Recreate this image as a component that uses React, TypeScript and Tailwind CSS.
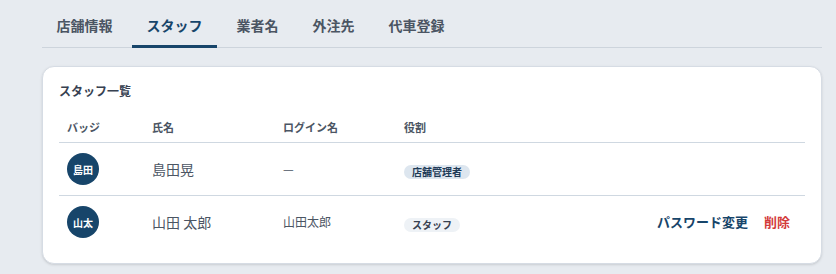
import React from 'react';

const tabs = ['店舗情報', 'スタッフ', '業者名', '外注先', '代車登録'];

type Staff = {
  badge: string;
  name: string;
  login: string;
  role: string;
  manager: boolean;
};

const staff: Staff[] = [
  { badge: '島田', name: '島田晃', login: '—', role: '店舗管理者', manager: true },
  { badge: '山太', name: '山田 太郎', login: '山田太郎', role: 'スタッフ', manager: false },
];

const App: React.FC = () => {
  return (
    <div
      className="min-h-[274px] w-[836px] bg-[#e7ebf0] px-[42px] pt-[5px]"
      style={{ fontFamily: '"Noto Sans CJK JP", "Noto Sans", sans-serif' }}
    >
      <div className="flex w-[780px] gap-[5px] border-b border-[#cdd4dc]">
        {tabs.map((t) => {
          const active = t === 'スタッフ';
          return (
            <div
              key={t}
              className={`-mb-px border-b-[3px] px-[14.5px] pt-2.5 pb-2.5 text-sm leading-5 font-bold ${
                active ? 'border-[#17456a] text-[#17456a]' : 'border-transparent text-[#4b5563]'
              }`}
            >
              {t}
            </div>
          );
        })}
      </div>

      <div className="mt-[18px] w-[780px] rounded-xl border border-[#d6dce4] bg-white px-4 pt-4 pb-[15px] shadow-sm">
        <h3 className="mb-3 text-xs leading-4 font-bold text-[#374151]">スタッフ一覧</h3>
        <table className="w-full border-collapse">
          <thead>
            <tr className="border-b border-[#cfd8e1]">
              <th className="w-[85px] px-2 pt-2 pb-[7px] text-left text-[11px] leading-4 font-bold text-[#4b5563]">バッジ</th>
              <th className="w-[131px] px-2 pt-2 pb-[7px] text-left text-[11px] leading-4 font-bold text-[#4b5563]">氏名</th>
              <th className="w-[121px] px-2 pt-2 pb-[7px] text-left text-[11px] leading-4 font-bold text-[#4b5563]">ログイン名</th>
              <th className="px-2 pt-2 pb-[7px] text-left text-[11px] leading-4 font-bold text-[#4b5563]">役割</th>
              <th className="px-2 pt-2 pb-[7px]"></th>
            </tr>
          </thead>
          <tbody>
            {staff.map((s, i) => (
              <tr key={s.name} className={i === 0 ? 'border-b border-[#cfd8e1]' : ''}>
                <td className="px-2 py-2.5">
                  <div className="flex h-8 w-8 items-center justify-center rounded-full bg-[#17456a] text-[10px] font-bold text-white">
                    {s.badge}
                  </div>
                </td>
                <td className="px-2 py-2.5 text-sm text-[#4b5563]">{s.name}</td>
                <td className="px-2 py-2.5 text-xs text-[#4b5563]">{s.login}</td>
                <td className="px-2 py-2.5">
                  <span
                    className={`inline-block rounded-full px-2 text-[10px] leading-[14px] font-bold ${
                      s.manager ? 'bg-[#dde6ef] text-[#1f3b57]' : 'bg-[#eef2f6] text-[#374151]'
                    }`}
                  >
                    {s.role}
                  </span>
                </td>
                <td className="py-2.5 pr-[15px] pl-2 text-right">
                  {!s.manager && (
                    <div className="flex justify-end gap-4 text-[13px] font-bold">
                      <button type="button" className="text-[#17456a]">パスワード変更</button>
                      <button type="button" className="text-[#d33b3b]">削除</button>
                    </div>
                  )}
                </td>
              </tr>
            ))}
          </tbody>
        </table>
      </div>
    </div>
  );
};

export default App;
